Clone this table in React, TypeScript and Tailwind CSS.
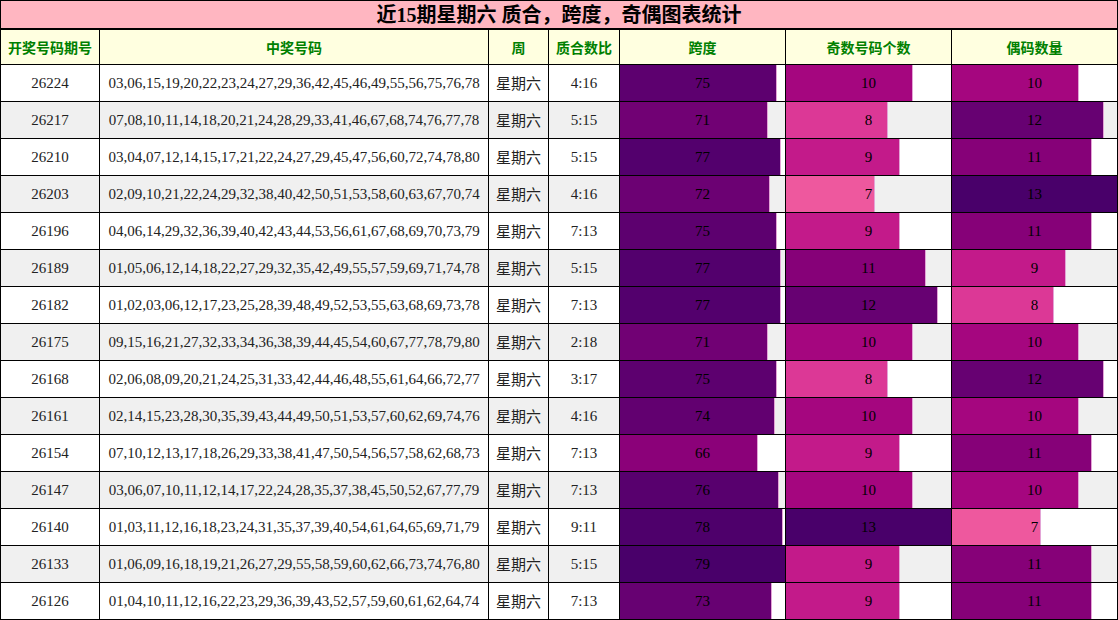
import React from "react";

type Row = {
  issue: number;
  nums: string;
  ratio: string;
  span: number;
  odd: number;
  even: number;
};

const rows: Row[] = [
  { issue: 26224, nums: "03,06,15,19,20,22,23,24,27,29,36,42,45,46,49,55,56,75,76,78", ratio: "4:16", span: 75, odd: 10, even: 10 },
  { issue: 26217, nums: "07,08,10,11,14,18,20,21,24,28,29,33,41,46,67,68,74,76,77,78", ratio: "5:15", span: 71, odd: 8, even: 12 },
  { issue: 26210, nums: "03,04,07,12,14,15,17,21,22,24,27,29,45,47,56,60,72,74,78,80", ratio: "5:15", span: 77, odd: 9, even: 11 },
  { issue: 26203, nums: "02,09,10,21,22,24,29,32,38,40,42,50,51,53,58,60,63,67,70,74", ratio: "4:16", span: 72, odd: 7, even: 13 },
  { issue: 26196, nums: "04,06,14,29,32,36,39,40,42,43,44,53,56,61,67,68,69,70,73,79", ratio: "7:13", span: 75, odd: 9, even: 11 },
  { issue: 26189, nums: "01,05,06,12,14,18,22,27,29,32,35,42,49,55,57,59,69,71,74,78", ratio: "5:15", span: 77, odd: 11, even: 9 },
  { issue: 26182, nums: "01,02,03,06,12,17,23,25,28,39,48,49,52,53,55,63,68,69,73,78", ratio: "7:13", span: 77, odd: 12, even: 8 },
  { issue: 26175, nums: "09,15,16,21,27,32,33,34,36,38,39,44,45,54,60,67,77,78,79,80", ratio: "2:18", span: 71, odd: 10, even: 10 },
  { issue: 26168, nums: "02,06,08,09,20,21,24,25,31,33,42,44,46,48,55,61,64,66,72,77", ratio: "3:17", span: 75, odd: 8, even: 12 },
  { issue: 26161, nums: "02,14,15,23,28,30,35,39,43,44,49,50,51,53,57,60,62,69,74,76", ratio: "4:16", span: 74, odd: 10, even: 10 },
  { issue: 26154, nums: "07,10,12,13,17,18,26,29,33,38,41,47,50,54,56,57,58,62,68,73", ratio: "7:13", span: 66, odd: 9, even: 11 },
  { issue: 26147, nums: "03,06,07,10,11,12,14,17,22,24,28,35,37,38,45,50,52,67,77,79", ratio: "7:13", span: 76, odd: 10, even: 10 },
  { issue: 26140, nums: "01,03,11,12,16,18,23,24,31,35,37,39,40,54,61,64,65,69,71,79", ratio: "9:11", span: 78, odd: 13, even: 7 },
  { issue: 26133, nums: "01,06,09,16,18,19,21,26,27,29,55,58,59,60,62,66,73,74,76,80", ratio: "5:15", span: 79, odd: 9, even: 11 },
  { issue: 26126, nums: "01,04,10,11,12,16,22,23,29,36,39,43,52,57,59,60,61,62,64,74", ratio: "7:13", span: 73, odd: 9, even: 11 },
];

// RdPu ramp, same basis spline as d3's interpolateRdPu
const ramp = "fff7f3fde0ddfcc5c0fa9fb5f768a1dd3497ae017e7a017749006a"
  .match(/.{6}/g)!
  .map((h) => [0, 2, 4].map((i) => parseInt(h.slice(i, i + 2), 16)));

function basis(t1: number, v0: number, v1: number, v2: number, v3: number) {
  const t2 = t1 * t1;
  const t3 = t2 * t1;
  return (
    ((1 - 3 * t1 + 3 * t2 - t3) * v0 +
      (4 - 6 * t2 + 3 * t3) * v1 +
      (1 + 3 * t1 + 3 * t2 - 3 * t3) * v2 +
      t3 * v3) /
    6
  );
}

function rdpu(t: number) {
  const n = ramp.length - 1;
  const out = [0, 1, 2].map((c) => {
    const vals = ramp.map((r) => r[c]);
    let i: number;
    if (t <= 0) { t = 0; i = 0; } else if (t >= 1) { t = 1; i = n - 1; } else i = Math.floor(t * n);
    const v1 = vals[i];
    const v2 = vals[i + 1];
    const v0 = i > 0 ? vals[i - 1] : 2 * v1 - v2;
    const v3 = i < n - 1 ? vals[i + 2] : 2 * v2 - v1;
    return Math.max(0, Math.min(255, Math.round(basis((t - i / n) * n, v0, v1, v2, v3))));
  });
  return `rgb(${out[0]},${out[1]},${out[2]})`;
}

const maxSpan = Math.max(...rows.map((r) => r.span));
const maxOdd = Math.max(...rows.map((r) => r.odd));
const maxEven = Math.max(...rows.map((r) => r.even));

const BarCell = ({ value, max }: { value: number; max: number }) => {
  const ratio = value / max;
  return (
    <div className="relative border-r border-b border-black h-[37px]">
      <div
        className={ratio < 1 ? "h-full border-r border-r-[#e3a4d6]" : "h-full"}
        style={{ width: `${ratio * 100}%`, backgroundColor: rdpu(ratio) }}
      />
      <span className="absolute inset-0 flex items-center justify-center text-[15px] text-black">
        {value}
      </span>
    </div>
  );
};

const headers = ["开奖号码期号", "中奖号码", "周", "质合数比", "跨度", "奇数号码个数", "偶码数量"];

const App = () => {
  return (
    <div
      className="w-[1118px] h-[620px] overflow-hidden bg-white"
      style={{ fontFamily: '"Liberation Serif", "Noto Sans CJK SC", serif' }}
    >
      <div className="grid grid-cols-[99px_389px_60px_71px_166px_166px_166px] border-l border-t border-black">
        <div className="col-span-7 h-[29px] bg-[#ffb6c1] border-r border-b-2 border-black flex items-center justify-center text-[20px] font-bold text-black">
          近15期星期六 质合，跨度，奇偶图表统计
        </div>

        {headers.map((h) => (
          <div
            key={h}
            className="h-[35px] bg-[#ffffe0] border-r border-b border-black flex items-center justify-center text-[14px] font-bold text-[#008000]"
            style={{ fontFamily: '"Noto Sans CJK SC", sans-serif' }}
          >
            {h}
          </div>
        ))}

        {rows.map((r, i) => {
          const bg = i % 2 === 1 ? "bg-[#f0f0f0]" : "bg-white";
          return (
            <React.Fragment key={r.issue}>
              <div className={`${bg} h-[37px] border-r border-b border-black flex items-center justify-center text-[15px] text-[#222]`}>
                {r.issue}
              </div>
              <div className={`${bg} h-[37px] border-r border-b border-black flex items-center justify-center text-[15px] text-[#222]`}>
                {r.nums}
              </div>
              <div
                className={`${bg} h-[37px] border-r border-b border-black flex items-center justify-center text-[15px] text-[#222]`}
                style={{ fontFamily: '"Noto Sans CJK SC", sans-serif' }}
              >
                星期六
              </div>
              <div className={`${bg} h-[37px] border-r border-b border-black flex items-center justify-center text-[15px] text-[#222]`}>
                {r.ratio}
              </div>
              <div className={bg}>
                <BarCell value={r.span} max={maxSpan} />
              </div>
              <div className={bg}>
                <BarCell value={r.odd} max={maxOdd} />
              </div>
              <div className={bg}>
                <BarCell value={r.even} max={maxEven} />
              </div>
            </React.Fragment>
          );
        })}
      </div>
    </div>
  );
};

export default App;
